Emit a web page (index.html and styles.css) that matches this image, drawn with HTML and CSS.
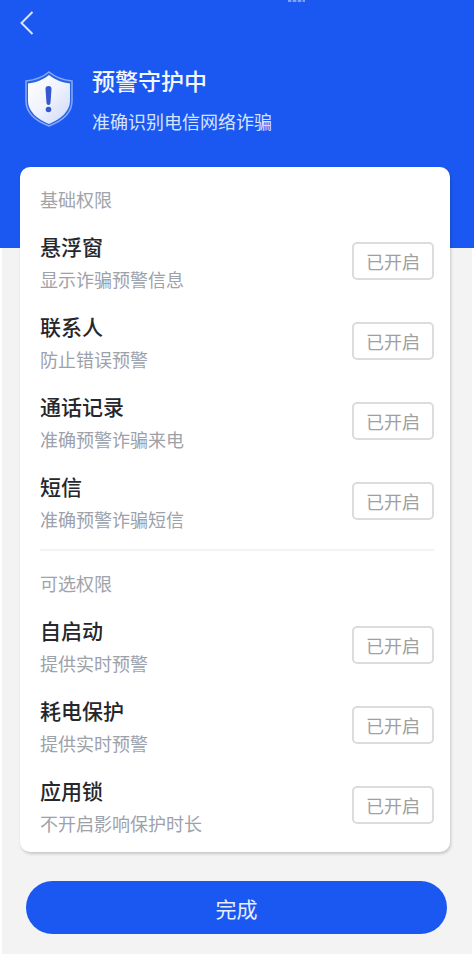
FILE: index.html
```html
<!DOCTYPE html>
<html lang="zh-CN">
<head>
<meta charset="utf-8">
<meta name="viewport" content="width=device-width, initial-scale=1">
<title>预警守护中</title>
<link rel="stylesheet" href="styles.css">
</head>
<body>
<main class="page">
  <span class="status-edge" aria-hidden="true"></span>
  <header class="header">
    <button class="back" type="button" aria-label="返回">
      <svg width="14" height="24" viewBox="0 0 14 24" fill="none" stroke="#d6e4ff" stroke-width="2"><path d="M12.500 1 1.500 12l11 11"/></svg>
    </button>
    <div class="hero">
      <svg class="shield" width="50" height="58" viewBox="0 0 50 58" aria-hidden="true">
        <defs>
          <linearGradient id="face" x1="0" y1="0" x2="1" y2="1">
            <stop offset="0" stop-color="#fff"/>
            <stop offset=".5" stop-color="#f0f3fd"/>
            <stop offset="1" stop-color="#cbd7f8"/>
          </linearGradient>
        </defs>
        <path d="M25 2C19 7 11 10 2 11v20c0 12 10 20 23 25 13-5 23-13 23-25V11C39 10 31 7 25 2Z" fill="#2b63e6" stroke="#86a9f8" stroke-width="1.500"/>
        <path d="M25 5C19 10 12 12.500 4 13.500V31c0 10 9 18 21 23 12-5 21-13 21-23V13.500C38 12.500 31 10 25 5Z" fill="url(#face)"/>
        <path d="M21.500 19q0-3 3-3t3 3l-1 14q-.2 2-2 2T22.500 33Z" fill="#3558cf"/>
        <circle cx="24.500" cy="39.500" r="2.800" fill="#3558cf"/>
      </svg>
      <div>
        <h1 class="title">预警守护中</h1>
        <p class="subtitle">准确识别电信网络诈骗</p>
      </div>
    </div>
  </header>

  <div class="card">
    <section class="group">
      <h2 class="group-title">基础权限</h2>
      <ul class="list">
        <li class="row"><div><h3 class="name">悬浮窗</h3><p class="desc">显示诈骗预警信息</p></div><button class="state" type="button">已开启</button></li>
        <li class="row"><div><h3 class="name">联系人</h3><p class="desc">防止错误预警</p></div><button class="state" type="button">已开启</button></li>
        <li class="row"><div><h3 class="name">通话记录</h3><p class="desc">准确预警诈骗来电</p></div><button class="state" type="button">已开启</button></li>
        <li class="row"><div><h3 class="name">短信</h3><p class="desc">准确预警诈骗短信</p></div><button class="state" type="button">已开启</button></li>
      </ul>
    </section>
    <section class="group">
      <h2 class="group-title">可选权限</h2>
      <ul class="list">
        <li class="row"><div><h3 class="name">自启动</h3><p class="desc">提供实时预警</p></div><button class="state" type="button">已开启</button></li>
        <li class="row"><div><h3 class="name">耗电保护</h3><p class="desc">提供实时预警</p></div><button class="state" type="button">已开启</button></li>
        <li class="row"><div><h3 class="name">应用锁</h3><p class="desc">不开启影响保护时长</p></div><button class="state" type="button">已开启</button></li>
      </ul>
    </section>
  </div>

  <button class="done" type="button">完成</button>
</main>
</body>
</html>
```
FILE: styles.css
```css
* {
  box-sizing: border-box;
}

body,
h1,
h2,
h3,
p,
ul {
  margin: 0;
  padding: 0;
}

body {
  background: #fff;
  font-family: "Noto Sans CJK SC", sans-serif;
}

button {
  padding: 0;
  border: 0;
  font: inherit;
}

.page {
  position: relative;
  display: flex;
  flex-direction: column;
  padding: 8px 24px 20px 20px;
  background:
    linear-gradient(#1b58f1, #1b58f1) 0 0 / 100% 248px no-repeat,
    linear-gradient(#f3f3f4, #f3f3f4) center / calc(100% - 4px) 100% no-repeat;
}

.status-edge {
  position: absolute;
  top: 0;
  left: 288px;
  width: 17px;
  height: 2px;
  background: repeating-linear-gradient(90deg, #7fa0f6 0 3px, #3d70f3 3px 5px);
}

.back {
  display: flex;
  align-items: center;
  width: 32px;
  height: 30px;
  background: none;
}

.hero {
  display: flex;
  align-items: flex-start;
  gap: 18px;
  padding: 22px 0 25px 4px;
}

.shield {
  flex: none;
  margin-top: 10px;
}

.title {
  color: #f2f7ff;
  font-size: 23px;
  font-weight: 500;
  line-height: 40px;
}

.subtitle {
  color: #d6e4ff;
  font-size: 18px;
  line-height: 42px;
}

.card {
  padding: 16px 16px 5px 20px;
  border-radius: 10px;
  background: #fff;
  box-shadow: 1px 2px 3px rgba(0, 0, 0, .18);
}

.group + .group {
  margin-top: 6px;
  padding-top: 16px;
  border-top: 2px solid #f3f3f4;
}

.group-title {
  padding-bottom: 8px;
  color: #a0a3aa;
  font-size: 18px;
  font-weight: 400;
  line-height: 32px;
}

.list {
  list-style: none;
}

.row {
  display: flex;
  align-items: flex-start;
  justify-content: space-between;
  padding: 7px 0;
}

.name {
  color: #25272c;
  font-size: 21px;
  font-weight: 500;
  line-height: 33px;
}

.desc {
  color: #9da1aa;
  font-size: 18px;
  line-height: 33px;
}

.state {
  width: 82px;
  height: 38px;
  margin-top: 12px;
  border: 2px solid #dcdcdc;
  border-radius: 5px;
  background: #fff;
  color: #a0a0a0;
  font-size: 18px;
  line-height: 34px;
}

.done {
  height: 53px;
  margin: 29px 3px 0 6px;
  border-radius: 27px;
  background: #1b58f1;
  color: #e6eeff;
  font-size: 21px;
  line-height: 50px;
}
```
